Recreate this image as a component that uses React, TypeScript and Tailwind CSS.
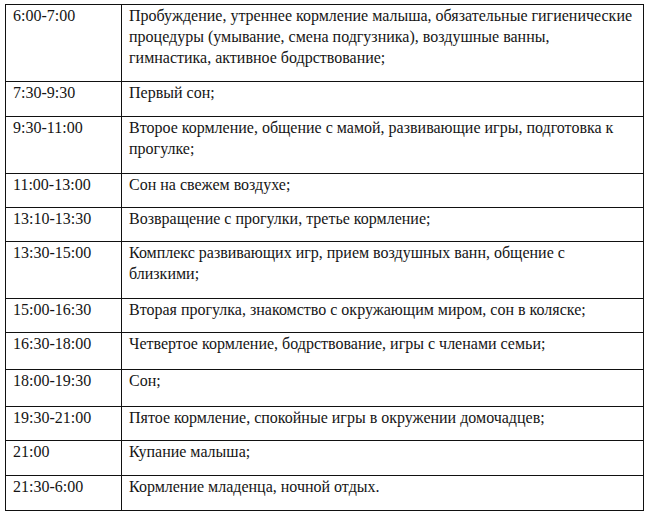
import React from "react";

const rows: [string, string[], string][] = [
  ["6:00-7:00", [
    "Пробуждение, утреннее кормление малыша, обязательные гигиенические",
    "процедуры (умывание, смена подгузника), воздушные ванны,",
    "гимнастика, активное бодрствование;",
  ], "pb-[13px]"],
  ["7:30-9:30", ["Первый сон;"], "pb-[13px]"],
  ["9:30-11:00", ["Второе кормление, общение с мамой, развивающие игры, подготовка к", "прогулке;"], "pb-[14px]"],
  ["11:00-13:00", ["Сон на свежем воздухе;"], "pb-[12px]"],
  ["13:10-13:30", ["Возвращение с прогулки, третье кормление;"], "pb-[12px]"],
  ["13:30-15:00", ["Комплекс развивающих игр, прием воздушных ванн, общение с", "близкими;"], "pb-[14px]"],
  ["15:00-16:30", ["Вторая прогулка, знакомство с окружающим миром, сон в коляске;"], "pb-[12px]"],
  ["16:30-18:00", ["Четвертое кормление, бодрствование, игры с членами семьи;"], "pb-[15px]"],
  ["18:00-19:30", ["Сон;"], "pb-[15px]"],
  ["19:30-21:00", ["Пятое кормление, спокойные игры в окружении домочадцев;"], "pb-[12px]"],
  ["21:00", ["Купание малыша;"], "pb-[13px]"],
  ["21:30-6:00", ["Кормление младенца, ночной отдых."], "pb-[13px]"],
];

export default function App() {
  return (
    <div className="w-[647px] h-[515px] bg-white pt-[4px] pl-[5px] overflow-hidden">
      <div className="w-[639px] border-t border-l border-[#111] text-[16px] leading-[21px] text-[#151515] font-['Liberation_Serif',serif]">
        {rows.map(([t, lines, pb], i) => (
          <div key={i} className="grid grid-cols-[116px_1fr] border-b border-[#111]">
            <div className={`border-r border-[#111] pl-[7px] pt-0 ${pb}`}>{t}</div>
            <div className={`border-r border-[#111] pl-[7px] pt-0 ${pb}`}>
              {lines.map((l, k) => (
                <div key={k} className="whitespace-nowrap">{l}</div>
              ))}
            </div>
          </div>
        ))}
      </div>
    </div>
  );
}
